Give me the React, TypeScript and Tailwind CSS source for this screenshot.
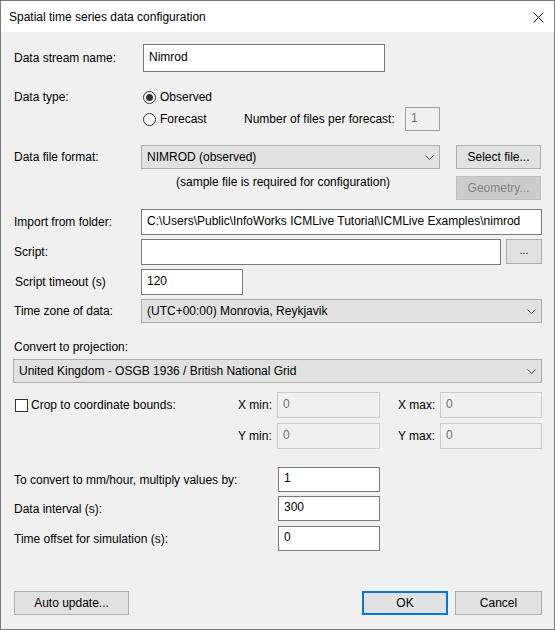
import React from "react";

// Win10-style dialog: "Spatial time series data configuration"

type BoxProps = {
  w: number;
  h?: number;
  value?: string;
  disabled?: boolean;
  readOnly?: boolean;
};

function TextBox({ w, h = 26, value = "", disabled = false, readOnly = false }: BoxProps) {
  let tone = "bg-white border-[#7a7a7a] text-black";
  if (disabled) tone = "bg-[#f0f0f0] border-[#cccccc] text-[#6d6d6d]";
  if (readOnly) tone = "bg-[#f0f0f0] border-[#a0a0a0] text-[#6d6d6d]";
  return (
    <div
      className={`box-border border flex items-center pl-[5px] pb-[3px] whitespace-nowrap overflow-hidden ${tone}`}
      style={{ width: w, height: h }}
    >
      {value}
    </div>
  );
}

function Chevron() {
  return (
    <svg width="9" height="5" viewBox="0 0 9 5" className="shrink-0">
      <polyline points="0.5,0.5 4.5,4.5 8.5,0.5" fill="none" stroke="#4d4d4d" strokeWidth="1" />
    </svg>
  );
}

function Select({ w, value }: { w: number; value: string }) {
  return (
    <div
      className="box-border h-[24px] border border-[#adadad] bg-[#e1e1e1] flex items-center pl-[5px] pr-[5px] justify-between whitespace-nowrap"
      style={{ width: w }}
    >
      <span className="pb-[1px]">{value}</span>
      <Chevron />
    </div>
  );
}

function Btn({
  w,
  h = 24,
  children,
  disabled = false,
  primary = false,
}: {
  w: number;
  h?: number;
  children: React.ReactNode;
  disabled?: boolean;
  primary?: boolean;
}) {
  let tone = "bg-[#e1e1e1] border border-[#adadad] text-black";
  if (disabled) tone = "bg-[#cccccc] border border-[#bfbfbf] text-[#838383]";
  if (primary) tone = "bg-[#e1e1e1] border-2 border-[#0078d7] text-black";
  return (
    <div
      className={`box-border flex items-center justify-center pb-[1px] shrink-0 ${tone}`}
      style={{ width: w, height: h }}
    >
      {children}
    </div>
  );
}

function Radio({ checked = false }: { checked?: boolean }) {
  return (
    <div className="box-border w-[13px] h-[13px] rounded-full border border-[#333333] bg-white flex items-center justify-center shrink-0">
      {checked && <div className="w-[7px] h-[7px] rounded-full bg-[#333333]" />}
    </div>
  );
}

function Checkbox() {
  return <div className="box-border w-[13px] h-[13px] border border-[#333333] bg-white shrink-0" />;
}

export default function App() {
  return (
    <div className="w-[555px] h-[630px] box-border border border-[#7a7a7a] bg-[#f0f0f0] flex flex-col text-[12px] text-black font-['Liberation_Sans',Arial,sans-serif] overflow-hidden">
      {/* Title bar */}
      <div className="h-[31px] bg-white flex items-center justify-between pl-[8px] pr-[10px] shrink-0">
        <span className="pt-[1px]">Spatial time series data configuration</span>
        <svg width="11" height="11" viewBox="0 0 11 11" className="mt-[2px]">
          <path d="M0.5 0.5 L10.5 10.5 M10.5 0.5 L0.5 10.5" stroke="#111" strokeWidth="1" />
        </svg>
      </div>

      {/* Body */}
      <div className="flex flex-col">
        <div className="flex items-center h-[28px] mt-[12px]">
          <div className="w-[142px] pl-[13px]">Data stream name:</div>
          <TextBox w={242} h={28} value="Nimrod" />
        </div>

        <div className="flex items-center h-[20px] mt-[15px]">
          <div className="w-[142px] pl-[13px]">Data type:</div>
          <Radio checked />
          <span className="ml-[4px]">Observed</span>
        </div>
        <div className="flex items-center h-[24px]">
          <div className="w-[142px]" />
          <div className="w-[101px] flex items-center">
            <Radio />
            <span className="ml-[4px]">Forecast</span>
          </div>
          <div className="w-[161px]">Number of files per forecast:</div>
          <TextBox w={35} h={24} value="1" readOnly />
        </div>

        <div className="flex items-center h-[24px] mt-[14px]">
          <div className="w-[140px] pl-[13px]">Data file format:</div>
          <Select w={299} value="NIMROD (observed)" />
          <div className="ml-[16px]">
            <Btn w={85}>Select file...</Btn>
          </div>
        </div>
        <div className="flex h-[24px] mt-[7px]">
          <div className="w-[175px]" />
          <div className="w-[280px] leading-[13px]">(sample file is required for configuration)</div>
          <Btn w={85} disabled>
            Geometry...
          </Btn>
        </div>

        <div className="flex items-center h-[26px] mt-[9px]">
          <div className="w-[140px] pl-[13px]">Import from folder:</div>
          <TextBox w={401} value="C:\Users\Public\InfoWorks ICMLive Tutorial\ICMLive Examples\nimrod" />
        </div>
        <div className="flex items-start h-[26px] mt-[4px]">
          <div className="w-[140px] pl-[13px] h-[26px] flex items-center">Script:</div>
          <TextBox w={360} />
          <div className="ml-[5px]">
            <Btn w={36} h={25}>
              <span className="text-[10px] pb-[2px]">...</span>
            </Btn>
          </div>
        </div>
        <div className="flex items-center h-[26px] mt-[4px]">
          <div className="w-[140px] pl-[14px]">Script timeout (s)</div>
          <TextBox w={102} value="120" />
        </div>
        <div className="flex items-center h-[24px] mt-[4px]">
          <div className="w-[140px] pl-[13px]">Time zone of data:</div>
          <Select w={401} value="(UTC+00:00) Monrovia, Reykjavik" />
        </div>

        <div className="flex items-center h-[16px] mt-[16px] pl-[13px]">Convert to projection:</div>
        <div className="flex h-[24px] mt-[4px] pl-[12px]">
          <Select w={529} value="United Kingdom - OSGB 1936 / British National Grid" />
        </div>

        <div className="flex items-center h-[26px] mt-[9px]">
          <div className="w-[237px] pl-[14px] flex items-center">
            <Checkbox />
            <span className="ml-[3px]">Crop to coordinate bounds:</span>
          </div>
          <div className="w-[39px]">X min:</div>
          <TextBox w={103} value="0" disabled />
          <div className="w-[18px]" />
          <div className="w-[42px]">X max:</div>
          <TextBox w={102} value="0" disabled />
        </div>
        <div className="flex items-center h-[26px] mt-[5px]">
          <div className="w-[237px]" />
          <div className="w-[39px]">Y min:</div>
          <TextBox w={103} value="0" disabled />
          <div className="w-[18px]" />
          <div className="w-[42px]">Y max:</div>
          <TextBox w={102} value="0" disabled />
        </div>

        <div className="flex items-center h-[25px] mt-[18px]">
          <div className="w-[277px] pl-[13px]">To convert to mm/hour, multiply values by:</div>
          <TextBox w={102} h={25} value="1" />
        </div>
        <div className="flex items-center h-[25px] mt-[4px]">
          <div className="w-[277px] pl-[13px]">Data interval (s):</div>
          <TextBox w={102} h={25} value="300" />
        </div>
        <div className="flex items-center h-[25px] mt-[5px]">
          <div className="w-[277px] pl-[13px]">Time offset for simulation (s):</div>
          <TextBox w={102} h={25} value="0" />
        </div>

        <div className="flex items-center h-[24px] mt-[40px] pl-[13px] pr-[12px]">
          <Btn w={115}>Auto update...</Btn>
          <div className="flex-1" />
          <Btn w={86} primary>
            OK
          </Btn>
          <div className="w-[7px]" />
          <Btn w={87}>Cancel</Btn>
        </div>
      </div>
    </div>
  );
}
